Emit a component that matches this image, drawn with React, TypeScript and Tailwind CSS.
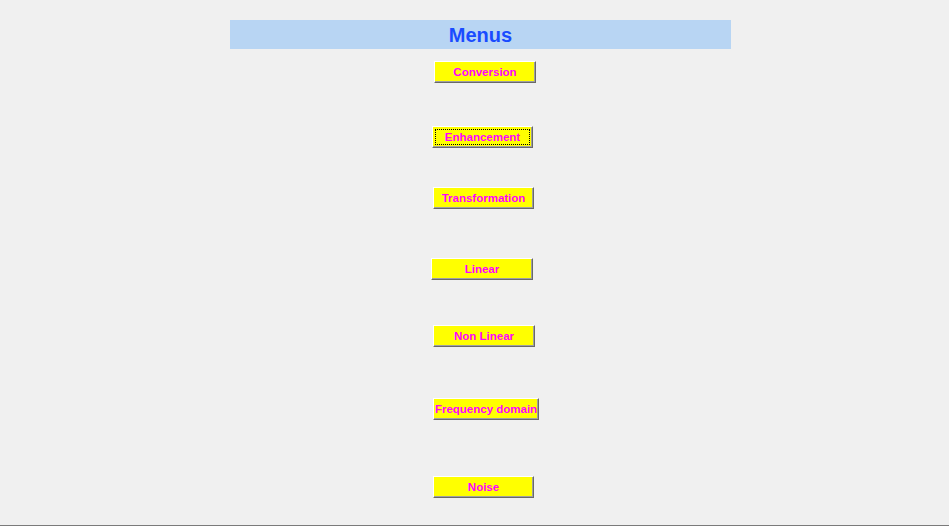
const buttons = [
  { label: 'Conversion', cls: 'mt-[12px] ml-[434px] w-[102px]' },
  { label: 'Enhancement', cls: 'mt-[43px] ml-[432px] w-[101px]', focused: true },
  { label: 'Transformation', cls: 'mt-[39px] ml-[433px] w-[101px]' },
  { label: 'Linear', cls: 'mt-[49px] ml-[431px] w-[102px]' },
  { label: 'Non Linear', cls: 'mt-[45px] ml-[433px] w-[102px]' },
  { label: 'Frequency domain', cls: 'mt-[51px] ml-[433px] w-[106px]' },
  { label: 'Noise', cls: 'mt-[56px] ml-[433px] w-[101px]' },
];

export default function App() {
  return (
    <div className="w-[949px] h-[526px] bg-[#f0f0f0] flex flex-col overflow-hidden font-['Liberation_Sans',Arial,sans-serif]">
      {/* Title bar */}
      <div className="mt-[20px] ml-[230px] w-[501px] h-[29px] bg-[#b8d5f3] flex items-center justify-center">
        <span className="text-[20px] font-bold text-[#1a4cff] leading-none">Menus</span>
      </div>

      {buttons.map((b) => (
        <button
          key={b.label}
          className={`${b.cls} h-[22px] shrink-0 bg-[#ffff00] border-t border-l border-white border-b border-r border-b-[#696969] border-r-[#696969] shadow-[inset_-1px_-1px_0_#a0a0a0] flex items-center justify-center p-[2px]`}
        >
          <span
            className={`w-full h-full flex items-center justify-center pt-[1px] text-[11.5px] font-bold text-[#ff00ff] leading-none whitespace-nowrap ${
              b.focused ? 'outline outline-1 outline-dotted outline-black -outline-offset-1' : ''
            }`}
          >
            {b.label}
          </span>
        </button>
      ))}

      <div className="flex-1" />
      <div className="h-px bg-[#7a7a7a] shrink-0" />
    </div>
  );
}
